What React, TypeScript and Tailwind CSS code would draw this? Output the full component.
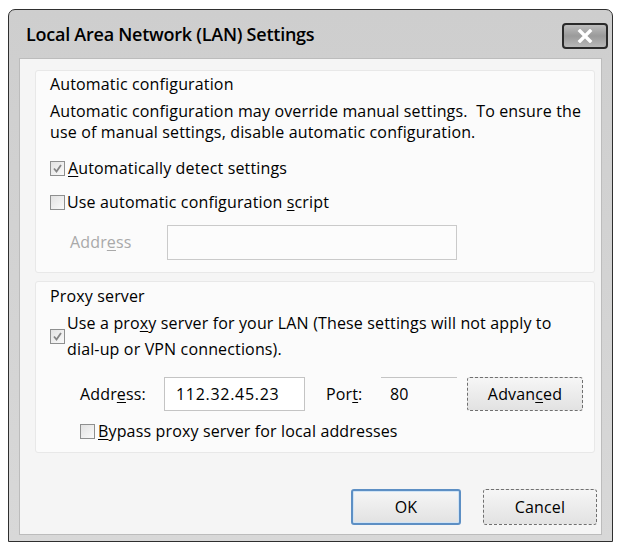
import type { ReactNode } from "react";

const font = { fontFamily: '"Open Sans", "Noto Sans", Arial, sans-serif' };

// Label text with one underlined access-key letter
function Key({ pre, k, post }: { pre?: string; k: string; post?: string }) {
  return (
    <>
      {pre}
      <span className="underline underline-offset-2">{k}</span>
      {post}
    </>
  );
}

function CheckBox({ checked }: { checked?: boolean }) {
  return (
    <span className="inline-flex h-[15px] w-[15px] shrink-0 items-center justify-center border border-[#8e8f8f] bg-gradient-to-br from-[#e2e2e2] to-[#fafafa]">
      {checked && (
        <svg width="11" height="11" viewBox="0 0 11 11">
          <path
            d="M2 5.5 L4.5 8.5 L9 2"
            fill="none"
            stroke="#858585"
            strokeWidth="1.8"
          />
        </svg>
      )}
    </span>
  );
}

function GroupBox({ children, className }: { children: ReactNode; className?: string }) {
  return (
    <div
      className={
        "shrink-0 rounded-[3px] border border-[#e8e8e8] bg-[#fbfbfb] pl-[14px] " +
        (className ?? "")
      }
    >
      {children}
    </div>
  );
}

function Button({ children, focused }: { children: ReactNode; focused?: boolean }) {
  return (
    <button
      type="button"
      className={
        "flex shrink-0 items-center justify-center rounded-[3px] bg-gradient-to-b from-[#f6f6f6] to-[#e2e2e2] text-[16px] text-black " +
        (focused
          ? "border-2 border-[#5d8fc4] shadow-[inset_0_0_0_1px_#cfe3f5]"
          : "border border-dashed border-[#707070]")
      }
    >
      {children}
    </button>
  );
}

export default function App() {
  return (
    <div
      className="h-[547px] w-[619px] overflow-hidden bg-white pl-[8px] pt-[9px] text-black"
      style={font}
    >
      <div className="flex h-[533px] w-[605px] flex-col rounded-t-[7px] border border-[#2f2f2f] bg-gradient-to-b from-[#cecece] to-[#d8d8d8]">
        {/* title bar */}
        <div className="flex h-[48px] shrink-0 items-center justify-between pl-[17px] pr-[4px]">
          <span className="text-[18px] font-semibold tracking-[-0.25px] text-black">
            Local Area Network (LAN) Settings
          </span>
          <span className="mt-[3px] flex h-[26px] w-[46px] items-center justify-center rounded-[4px] border-2 border-[#2a2a2a] bg-gradient-to-b from-[#bdbdbd] via-[#9a9a9a] to-[#b8b8b8]">
            <svg width="16" height="14" viewBox="0 0 16 14">
              <path
                d="M3 2 L13 12 M13 2 L3 12"
                stroke="#fff"
                strokeWidth="3.4"
                strokeLinecap="square"
              />
            </svg>
          </span>
        </div>

        {/* client area */}
        <div className="mx-[10px] mb-[6px] flex flex-1 flex-col border border-[#bcbcbc] bg-[#f5f5f5] pl-[15px] pr-[6px] pt-[11px] text-[16px] leading-[21px] tracking-[0.15px]">
          <GroupBox className="h-[203px] pt-[3px]">
            <div>Automatic configuration</div>
            <div className="mt-[6px]">
              Automatic configuration may override manual settings.&nbsp; To ensure the
              <br />
              use of manual settings, disable automatic configuration.
            </div>
            <label className="mt-[15px] flex items-center gap-[3px]">
              <CheckBox checked />
              <span>
                <Key k="A" post="utomatically detect settings" />
              </span>
            </label>
            <label className="mt-[13px] flex items-center gap-[2px]">
              <CheckBox />
              <span>
                <Key pre="Use automatic configuration " k="s" post="cript" />
              </span>
            </label>
            <div className="mt-[12px] flex items-center">
              <span className="ml-[20px] w-[97px] shrink-0 text-[#a9a9a9]">
                <Key pre="Addr" k="e" post="ss" />
              </span>
              <span className="h-[35px] w-[290px] shrink-0 border border-[#cacaca] bg-[#fcfcfc]" />
            </div>
          </GroupBox>

          <GroupBox className="mt-[8px] h-[172px] pt-[4px]">
            <div>Proxy server</div>
            <label className="mt-[3px] flex items-center gap-[2px] leading-[26px]">
              <CheckBox checked />
              <span>
                <Key pre="Use a pro" k="x" post="y server for your LAN (These settings will not apply to" />
                <br />
                dial-up or VPN connections).
              </span>
            </label>
            <div className="mt-[15px] flex items-center">
              <span className="ml-[30px] w-[84px] shrink-0">
                <Key pre="Addr" k="e" post="ss:" />
              </span>
              <span className="flex h-[34px] w-[141px] shrink-0 items-center border border-[#c4c4c4] bg-white pl-[11px] tracking-[0.7px]">
                112.32.45.23
              </span>
              <span className="ml-[21px] w-[55px] shrink-0">
                <Key pre="Por" k="t" post=":" />
              </span>
              <span className="flex h-[34px] w-[76px] shrink-0 items-center border-t border-[#c4c4c4] pl-[9px]">
                80
              </span>
              <span className="ml-[10px] shrink-0">
                <Button>
                  <span className="flex h-[32px] w-[114px] items-center justify-center">
                    <Key pre="Advan" k="c" post="ed" />
                  </span>
                </Button>
              </span>
            </div>
            <label className="ml-[30px] mt-[10px] flex items-center gap-[3px]">
              <CheckBox />
              <span>
                <Key k="B" post="ypass proxy server for local addresses" />
              </span>
            </label>
          </GroupBox>

          <div className="mt-[36px] flex justify-end gap-[22px] mr-[-2px]">
            <Button focused>
              <span className="flex h-[32px] w-[106px] items-center justify-center">OK</span>
            </Button>
            <Button>
              <span className="flex h-[34px] w-[112px] items-center justify-center">Cancel</span>
            </Button>
          </div>
        </div>
      </div>
    </div>
  );
}
